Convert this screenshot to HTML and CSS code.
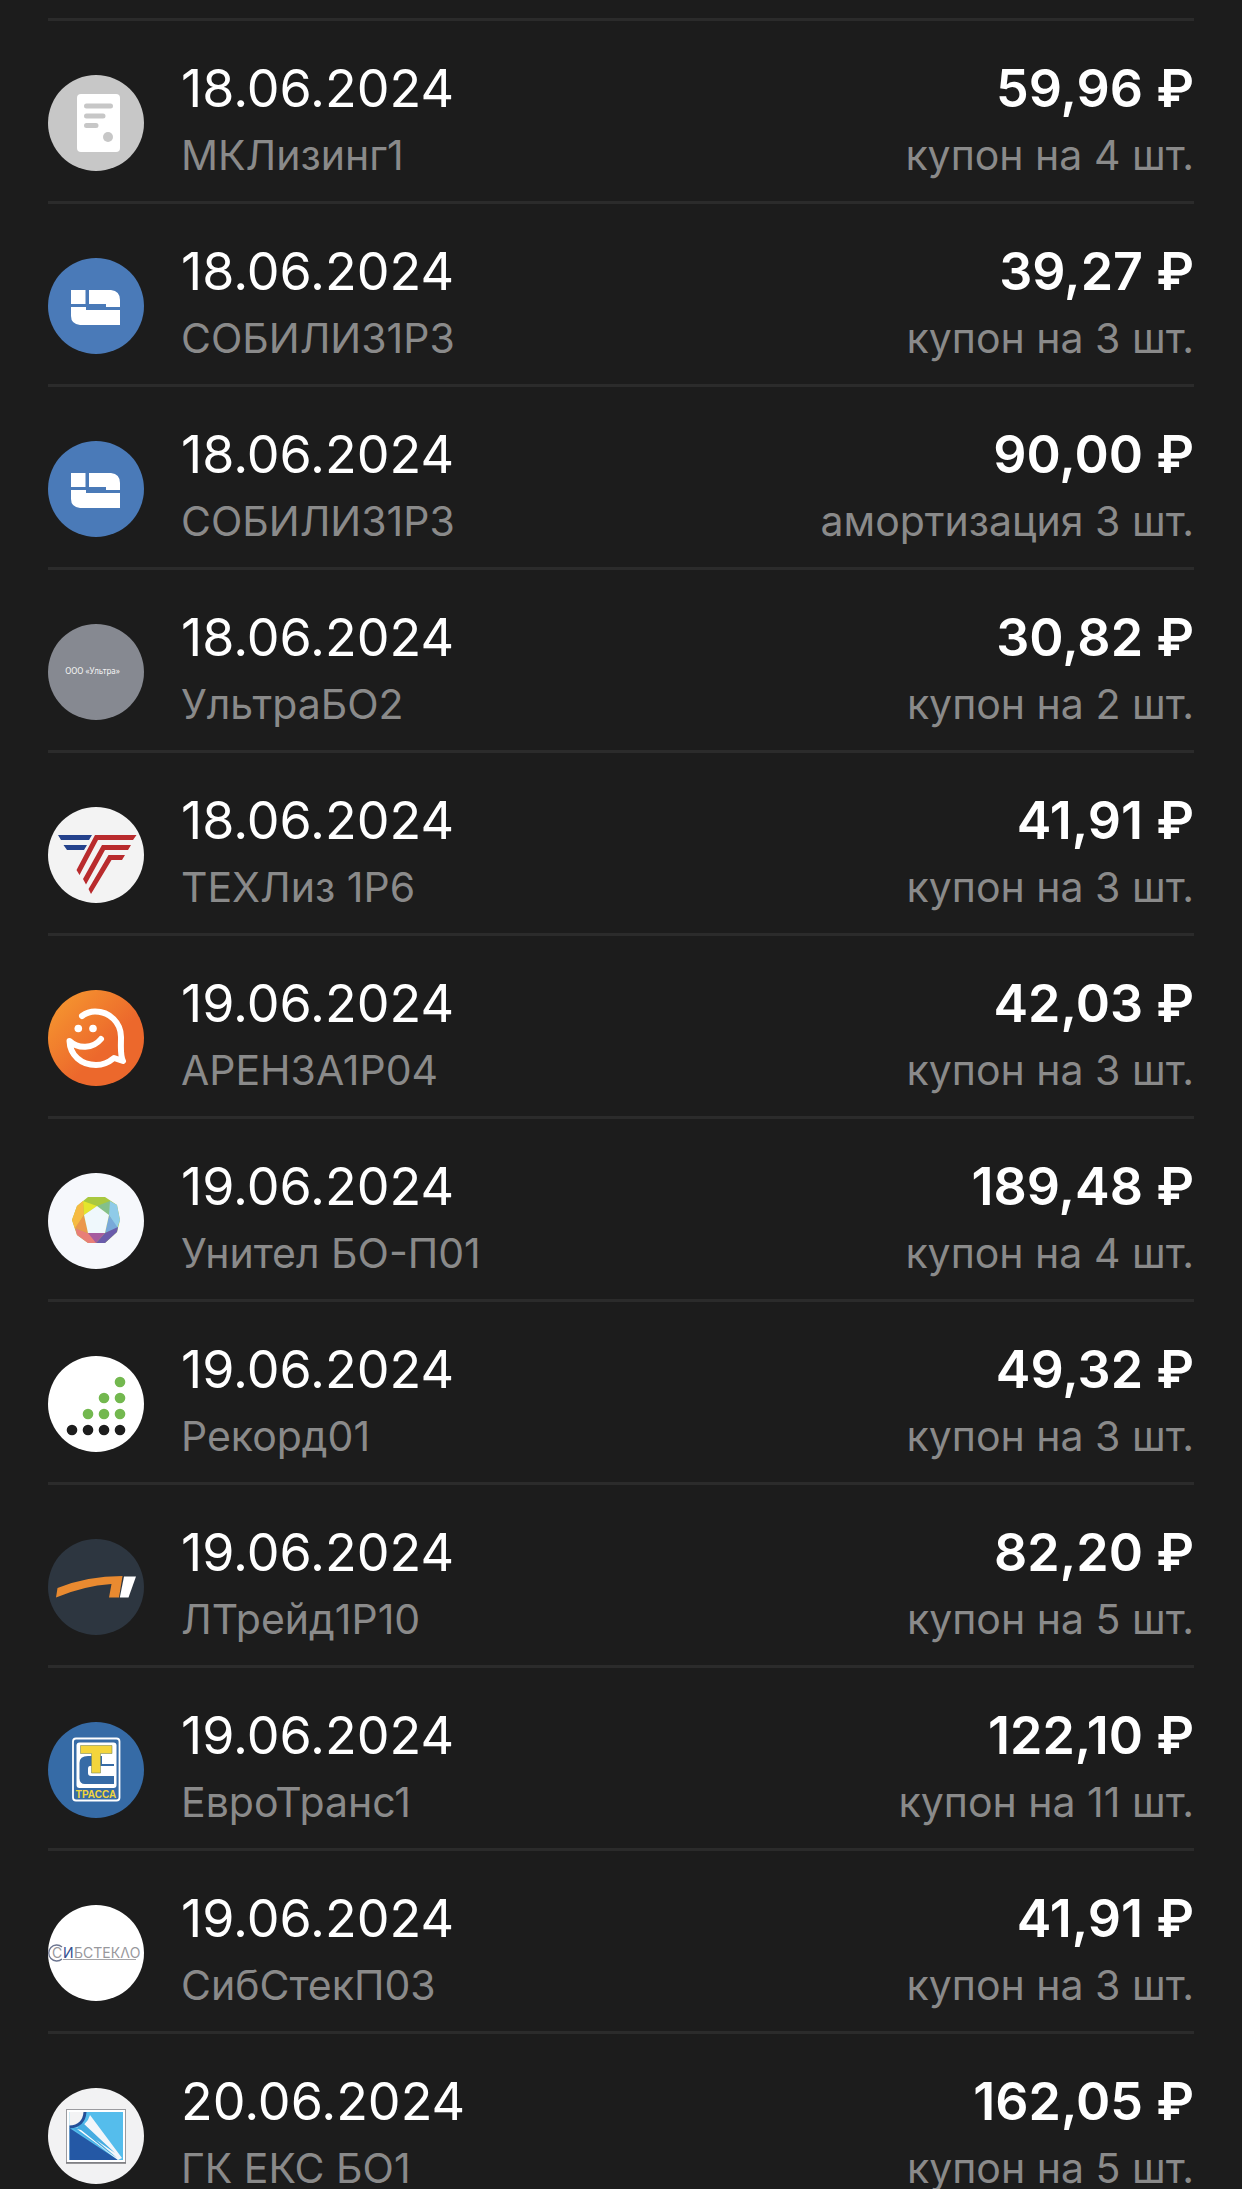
FILE: index.html
```html
<!DOCTYPE html>
<html lang="ru">
<head>
	<meta charset="utf-8">
	<meta name="viewport" content="width=device-width, initial-scale=1">
	<title>Купоны</title>
	<link rel="stylesheet" href="styles.css">
</head>
<body>

<ul class="payments">

	<li class="payment">
		<svg class="logo" viewBox="0 0 96 96">
			<rect width="96" height="96" fill="#c7c7c7"/>
			<rect x="29" y="19" width="43" height="58" rx="4" fill="#fff"/>
			<path d="M38.5 31H62.5M38.5 41H55M38.5 50.5H48" stroke="#c7c7c7" stroke-width="5" stroke-linecap="round"/>
			<circle cx="60" cy="62" r="5" fill="#c7c7c7"/>
		</svg>
		<div class="info">
			<span class="date">18.06.2024</span>
			<span class="note">МКЛизинг1</span>
		</div>
		<div class="info sum">
			<span class="amount">59,96 ₽</span>
			<span class="note">купон на 4 шт.</span>
		</div>
	</li>

	<li class="payment">
		<svg class="logo" viewBox="0 0 96 96">
			<g id="sobi">
				<rect width="96" height="96" fill="#4a7ab8"/>
				<path d="M23 32H37.5V46H23ZM41 32H63Q72 33 72 42V49H58V46H41ZM23 49H38V52H72V67H32Q23 66 23 58Z" fill="#fff"/>
			</g>
		</svg>
		<div class="info">
			<span class="date">18.06.2024</span>
			<span class="note">СОБИЛИЗ1Р3</span>
		</div>
		<div class="info sum">
			<span class="amount">39,27 ₽</span>
			<span class="note">купон на 3 шт.</span>
		</div>
	</li>

	<li class="payment">
		<svg class="logo" viewBox="0 0 96 96"><use href="#sobi"/></svg>
		<div class="info">
			<span class="date">18.06.2024</span>
			<span class="note">СОБИЛИЗ1Р3</span>
		</div>
		<div class="info sum">
			<span class="amount">90,00 ₽</span>
			<span class="note">амортизация 3 шт.</span>
		</div>
	</li>

	<li class="payment">
		<svg class="logo" viewBox="0 0 96 96">
			<rect width="96" height="96" fill="#868991"/>
			<text class="logo-ultra" x="44.5" y="50">ООО «Ультра»</text>
		</svg>
		<div class="info">
			<span class="date">18.06.2024</span>
			<span class="note">УльтраБО2</span>
		</div>
		<div class="info sum">
			<span class="amount">30,82 ₽</span>
			<span class="note">купон на 2 шт.</span>
		</div>
	</li>

	<li class="payment">
		<svg class="logo" viewBox="0 0 96 96">
			<rect width="96" height="96" fill="#f3f3f3"/>
			<path d="M10 28H44L41 33H13ZM15.5 38H39L36 43H19Z" fill="#24428c"/>
			<path d="M47 28H88.5L85 33H50L31.5 68L28.5 63ZM54 38H83L80 43H57L38 77.5L35 72ZM60.5 48H77L74 53H63.5L43 87L40.5 82Z" fill="#b92b2d"/>
		</svg>
		<div class="info">
			<span class="date">18.06.2024</span>
			<span class="note">ТЕХЛиз 1Р6</span>
		</div>
		<div class="info sum">
			<span class="amount">41,91 ₽</span>
			<span class="note">купон на 3 шт.</span>
		</div>
	</li>

	<li class="payment">
		<svg class="logo" viewBox="0 0 96 96">
			<defs>
				<linearGradient id="orange" x1="0" y1="0" x2="1" y2="1">
					<stop offset="0.1" stop-color="#f5942f"/>
					<stop offset="0.6" stop-color="#ec682c"/>
				</linearGradient>
			</defs>
			<rect width="96" height="96" fill="url(#orange)"/>
			<path d="M34 26C38 23 42 21.5 47 21.5C62 21.5 73 33 73 47C73 58 72 65 75 71L66 68C60 73 54 75 48 75C33 75 22 65 21.5 51C30 59 45 59 53 49" fill="none" stroke="#fff" stroke-width="6" stroke-linecap="round" stroke-linejoin="round"/>
			<circle cx="30.3" cy="38.5" r="3.8" fill="#fff"/>
			<circle cx="45" cy="38.5" r="3.8" fill="#fff"/>
		</svg>
		<div class="info">
			<span class="date">19.06.2024</span>
			<span class="note">АРЕНЗА1Р04</span>
		</div>
		<div class="info sum">
			<span class="amount">42,03 ₽</span>
			<span class="note">купон на 3 шт.</span>
		</div>
	</li>

	<li class="payment">
		<svg class="logo" viewBox="0 0 96 96">
			<rect width="96" height="96" fill="#f6f8fc"/>
			<path d="M40 24H57L69 32L72 47L69 59L57 70H40L29 62L24 47L29 33Z" fill="#a9c83f"/>
			<path d="M35 28L49 33L36 42Z" fill="#e4e62c"/>
			<path d="M49 33L62 28V43Z" fill="#83c08a"/>
			<path d="M62 28L69 32L72 47L69 56L61 42Z" fill="#8fcbe8"/>
			<path d="M61 42L70 55L57 60Z" fill="#78a9d8"/>
			<path d="M57 60L70 54L69 59L57 70H48Z" fill="#6a5cab"/>
			<path d="M40 60H57L48 70H40Z" fill="#a65c9f"/>
			<path d="M40 60L27 55L29 62L40 70H48Z" fill="#e87f77"/>
			<path d="M29 33L35 28L36 42L27 56L24 47Z" fill="#f6bb42"/>
			<path d="M36 42L40 60L27 55Z" fill="#eb984c"/>
			<path d="M49 33L61 42L57 60H40L36 42Z" fill="#eff8fc"/>
		</svg>
		<div class="info">
			<span class="date">19.06.2024</span>
			<span class="note">Унител БО-П01</span>
		</div>
		<div class="info sum">
			<span class="amount">189,48 ₽</span>
			<span class="note">купон на 4 шт.</span>
		</div>
	</li>

	<li class="payment">
		<svg class="logo" viewBox="0 0 96 96">
			<rect width="96" height="96" fill="#fff"/>
			<g fill="#73b84f">
				<circle cx="72" cy="26" r="5.3"/>
				<circle cx="56" cy="42" r="5.3"/>
				<circle cx="72" cy="42" r="5.3"/>
				<circle cx="40" cy="58" r="5.3"/>
				<circle cx="56" cy="58" r="5.3"/>
				<circle cx="72" cy="58" r="5.3"/>
			</g>
			<g fill="#1d1d1d">
				<circle cx="24" cy="74" r="5.3"/>
				<circle cx="40" cy="74" r="5.3"/>
				<circle cx="56" cy="74" r="5.3"/>
				<circle cx="72" cy="74" r="5.3"/>
			</g>
		</svg>
		<div class="info">
			<span class="date">19.06.2024</span>
			<span class="note">Рекорд01</span>
		</div>
		<div class="info sum">
			<span class="amount">49,32 ₽</span>
			<span class="note">купон на 3 шт.</span>
		</div>
	</li>

	<li class="payment">
		<svg class="logo" viewBox="0 0 96 96">
			<rect width="96" height="96" fill="#2d3640"/>
			<path d="M9.5 49Q39 37 74.5 37L71 58.5H61L63.5 45Q35 47 8 58.5Z" fill="#e98a30"/>
			<path d="M76 37.5H88L80.5 58.5H71.8Z" fill="#fff"/>
		</svg>
		<div class="info">
			<span class="date">19.06.2024</span>
			<span class="note">ЛТрейд1Р10</span>
		</div>
		<div class="info sum">
			<span class="amount">82,20 ₽</span>
			<span class="note">купон на 5 шт.</span>
		</div>
	</li>

	<li class="payment">
		<svg class="logo" viewBox="0 0 96 96">
			<rect width="96" height="96" fill="#366ba6"/>
			<rect x="25" y="16.5" width="46.5" height="62" rx="3" fill="none" stroke="#fff" stroke-width="1.8"/>
			<rect x="28.5" y="20.5" width="40" height="45.5" rx="3" fill="#fff"/>
			<path d="M40 34H54V42H66V44H42Q40 44 40 47V51Q40 54 43 54H66V62H37Q31.5 62 31.5 56V41Q31.5 34 40 34Z" fill="#366ba6"/>
			<path d="M32.5 23.5H64V31.5H52.5V51H43.5V31.5H32.5Z" fill="#f3d53c" stroke="#7a8a5c" stroke-width="0.6"/>
			<text class="logo-trassa" x="48" y="75.5">ТРАССА</text>
		</svg>
		<div class="info">
			<span class="date">19.06.2024</span>
			<span class="note">ЕвроТранс1</span>
		</div>
		<div class="info sum">
			<span class="amount">122,10 ₽</span>
			<span class="note">купон на 11 шт.</span>
		</div>
	</li>

	<li class="payment">
		<svg class="logo" viewBox="0 0 96 96">
			<rect width="96" height="96" fill="#fff"/>
			<path d="M14 42A8 8 0 1 0 14 54" fill="none" stroke="#6d7691" stroke-width="1.4"/>
			<path d="M15 54.5H88" stroke="#a5a5a8"/>
			<text class="logo-sib" x="4" y="52.5">С<tspan class="logo-sib-blue" x="15">И</tspan><tspan x="26">БСТЕКΛО</tspan></text>
		</svg>
		<div class="info">
			<span class="date">19.06.2024</span>
			<span class="note">СибСтекП03</span>
		</div>
		<div class="info sum">
			<span class="amount">41,91 ₽</span>
			<span class="note">купон на 3 шт.</span>
		</div>
	</li>

	<li class="payment">
		<svg class="logo" viewBox="0 0 96 96">
			<rect width="96" height="96" fill="#f2f2f3"/>
			<rect x="18.5" y="21.5" width="59" height="53" fill="#fff" stroke="#9b9b9f"/>
			<path d="M18 75H78" stroke="#77777b" stroke-width="1.5"/>
			<rect x="21.5" y="24" width="53.5" height="48" fill="#55bdec"/>
			<path d="M21.5 40V72H70Z" fill="#2458a5"/>
			<path d="M42 27L74 70L70 72L27 40Q39 38 42 27Z" fill="#f3f6fa"/>
			<path d="M24 40L33 39L69 70ZM28 38L35 35L67 65Z" fill="#45ace1"/>
			<path d="M29 41L33 42L68 70Z" fill="#fff"/>
			<path d="M21.5 24H36.5Q35 38 21.5 38Z" fill="#f3f3f4"/>
			<path d="M37 24Q36 38 21.5 39" fill="none" stroke="#244f98" stroke-width="3"/>
		</svg>
		<div class="info">
			<span class="date">20.06.2024</span>
			<span class="note">ГК ЕКС БО1</span>
		</div>
		<div class="info sum">
			<span class="amount">162,05 ₽</span>
			<span class="note">купон на 5 шт.</span>
		</div>
	</li>

</ul>

</body>
</html>
```
FILE: styles.css
```css
* {
	box-sizing: border-box;
}

body {
	margin: 0;
	font-family: Inter, "Liberation Sans", sans-serif;
	color: white;
	background: #1c1c1c;
}

/* The list fills the screen, the last row is cut by its edge */
.payments {
	height: 100vh;
	overflow: hidden;
	margin: 0;
	padding: 18px 48px 0;
	list-style: none;
}

.payment {
	display: flex;
	align-items: center;
	padding: 38px 0 14px;
	border-top: 3px solid #2b2b2b;
}

.logo {
	flex: none;
	width: 96px;
	height: 96px;
	margin-right: 37px;
	border-radius: 50%;
}

.info {
	display: flex;
	flex-direction: column;
	gap: 4px;
	white-space: nowrap;
}

.sum {
	margin-left: auto;
	text-align: right;
}

.date, .amount {
	font-size: 52px;
	line-height: 60px;
}

.amount {
	font-weight: 600;
}

.note {
	font-size: 41px;
	line-height: 64px;
	color: #8a8a8a;
}

/* Lettering inside the logos */
.logo-ultra {
	font-family: "Noto Sans", sans-serif;
	font-size: 8px;
	text-anchor: middle;
	fill: #f4f4f4;
}

.logo-trassa {
	font-family: "Liberation Sans", sans-serif;
	font-size: 10px;
	font-weight: bold;
	text-anchor: middle;
	fill: #f3d53c;
}

.logo-sib {
	font-family: Inter, sans-serif;
	font-size: 14px;
	fill: #98989c;
}

.logo-sib-blue {
	fill: #34508f;
}
```
